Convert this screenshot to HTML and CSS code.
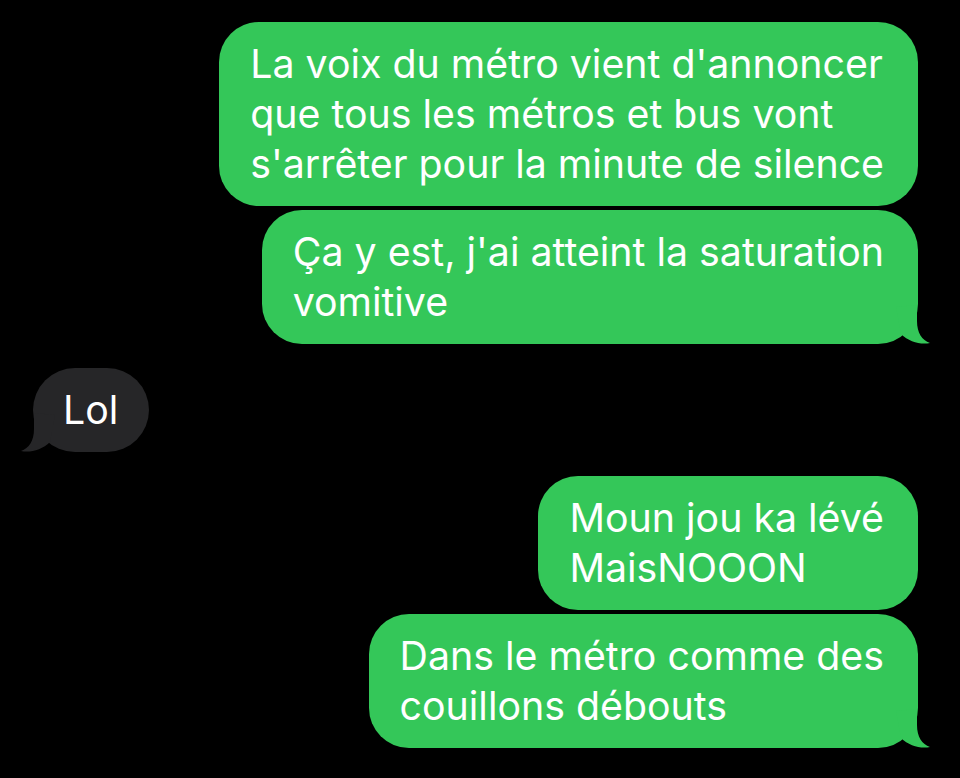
FILE: index.html
```html
<!DOCTYPE html>
<html lang="fr">
<head>
  <meta charset="UTF-8">
  <meta name="viewport" content="width=device-width, initial-scale=1">
  <title>Messages</title>
  <link rel="stylesheet" href="styles.css">
</head>
<body>

  <div class="thread">
    <div class="msg sent">La voix du métro vient d'annoncer<br>que tous les métros et bus vont<br>s'arrêter pour la minute de silence</div>
    <div class="msg sent last">Ça y est, j'ai atteint la saturation<br>vomitive
      <svg class="tail" width="54" height="46" viewBox="0 0 54 46"><path d="M39 6 L39 22 C39 34 44 41 52 44 C43 46 31 43 23 35 L18 8 Z"/></svg>
    </div>

    <div class="msg received last">Lol
      <svg class="tail" width="54" height="46" viewBox="0 0 54 46"><path d="M15 6 L15 22 C15 34 10 41 2 44 C11 46 23 43 31 35 L36 8 Z"/></svg>
    </div>

    <div class="msg sent">Moun jou ka lévé<br>MaisNOOON</div>
    <div class="msg sent last">Dans le métro comme des<br>couillons débouts
      <svg class="tail" width="54" height="46" viewBox="0 0 54 46"><path d="M39 6 L39 22 C39 34 44 41 52 44 C43 46 31 43 23 35 L18 8 Z"/></svg>
    </div>
  </div>

</body>
</html>
```

FILE: styles.css
```css
body {
  margin: 0;
  background: #000;
  font-family: Inter, "Noto Sans", sans-serif;
}

.thread {
  display: flex;
  flex-direction: column;
  align-items: flex-end;
  padding: 22px 42px 0 33px;
}

.msg {
  position: relative;
  box-sizing: border-box;
  font-size: 39.3px;
  line-height: 50px;
  color: #fff;
  padding: 17px 34px 17px 31px;
  border-radius: 40px;
  white-space: nowrap;
  margin-top: 4px;
}

.msg:first-child {
  margin-top: 0;
}

.sent {
  background: #34c759;
}

.received {
  align-self: flex-start;
  background: #262628;
  border-radius: 43px;
  margin-top: 24px;
  padding: 17px 31px 17px 30px;
}

.received + .sent {
  margin-top: 24px;
}

.tail {
  position: absolute;
  bottom: -1px;
}

.sent .tail {
  right: -14px;
  fill: #34c759;
}

.received .tail {
  left: -14px;
  fill: #262628;
}
```
